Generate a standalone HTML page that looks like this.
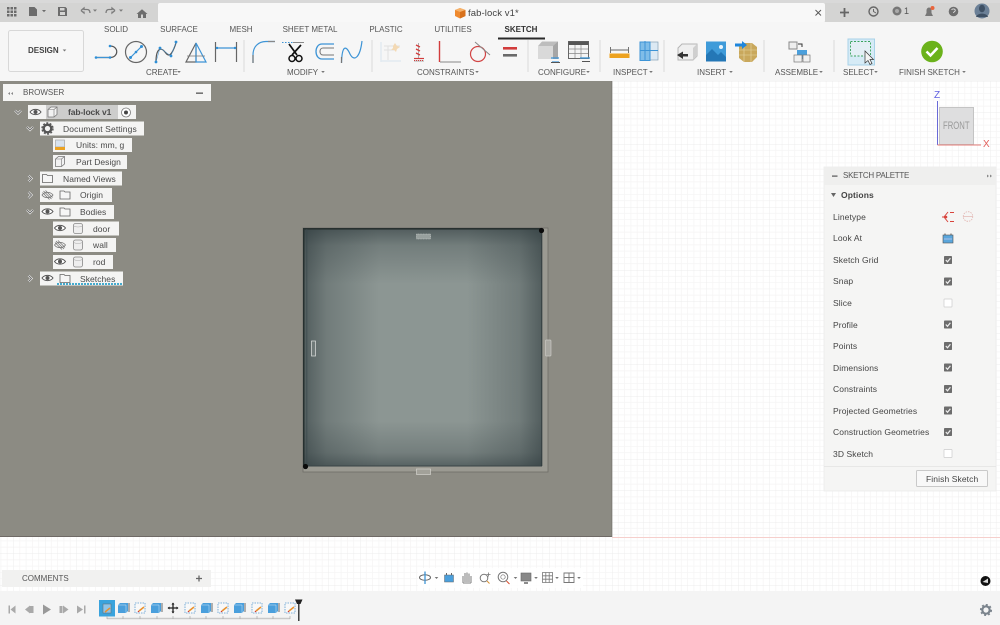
<!DOCTYPE html>
<html><head><meta charset="utf-8"><style>
html,body{margin:0;padding:0;width:1000px;height:625px;overflow:hidden;background:#fff;font-family:"Liberation Sans",sans-serif;color:#444}
.t{position:absolute;white-space:nowrap;font-size:8px;letter-spacing:0;line-height:10px;color:#555}
.c{transform:translateX(-50%)}
.n{position:absolute;white-space:nowrap;font-size:8.5px;letter-spacing:.05px;line-height:14px;color:#4a4a4a}
.p{position:absolute;left:833px;font-size:8.5px;letter-spacing:.1px;line-height:10px;color:#444;white-space:nowrap}
svg{position:absolute;left:0;top:0}
</style></head><body>
<svg width="1000" height="625" viewBox="0 0 1000 625" fill="none">
<defs>
<pattern id="g" x="612" y="81" width="31.5" height="31.5" patternUnits="userSpaceOnUse">
<path d="M6.3 0V31.5M12.6 0V31.5M18.9 0V31.5M25.2 0V31.5M0 6.3H31.5M0 12.6H31.5M0 18.9H31.5M0 25.2H31.5" stroke="#f6f5f5" stroke-width=".8"/>
<path d="M0 0V31.5M0 0H31.5" stroke="#ececec" stroke-width=".9"/>
</pattern>
<linearGradient id="vl" x1="0" y1="0" x2="1" y2="0"><stop offset="0" stop-color="#2c383b" stop-opacity=".6"/><stop offset=".3" stop-color="#2c383b" stop-opacity=".28"/><stop offset="1" stop-color="#2c383b" stop-opacity="0"/></linearGradient>
<linearGradient id="vr" x1="1" y1="0" x2="0" y2="0"><stop offset="0" stop-color="#2c383b" stop-opacity=".6"/><stop offset=".3" stop-color="#2c383b" stop-opacity=".28"/><stop offset="1" stop-color="#2c383b" stop-opacity="0"/></linearGradient>
<linearGradient id="vt" x1="0" y1="0" x2="0" y2="1"><stop offset="0" stop-color="#2c383b" stop-opacity=".6"/><stop offset=".3" stop-color="#2c383b" stop-opacity=".26"/><stop offset="1" stop-color="#2c383b" stop-opacity="0"/></linearGradient>
<linearGradient id="vb" x1="0" y1="1" x2="0" y2="0"><stop offset="0" stop-color="#2c383b" stop-opacity=".55"/><stop offset=".3" stop-color="#2c383b" stop-opacity=".25"/><stop offset="1" stop-color="#2c383b" stop-opacity="0"/></linearGradient>
<g id="eye"><path d="M-5.500 0C-3 -3.500 3 -3.500 5.500 0C3 3.500 -3 3.500 -5.500 0Z" fill="#fff" stroke="#555" stroke-width="1"/><circle r="2" fill="#555"/></g>
<g id="eyeoff" stroke="#777" stroke-width=".8"><path d="M-5.500 0C-3 -3.500 3 -3.500 5.500 0C3 3.500 -3 3.500 -5.500 0Z"/><path d="M-4 -4L4 4M-2 -4.500L5 2.500M-5 -2.500L2 4.500"/></g>
<path id="folder" d="M-5 -4H-1L0 -3H5V4H-5Z" fill="#f6f6f6" stroke="#666" stroke-width=".8"/>
<g id="body"><rect x="-4.500" y="-5" width="9" height="10" rx="2" fill="#eee" stroke="#888" stroke-width=".8"/><path d="M-4.500 -2.500Q0 -.5 4.500 -2.500" stroke="#aaa" stroke-width=".6"/></g>
<g id="comp"><path d="M-4.500 -2.500L-1.500 -5H4.500V2.500L1.500 5H-4.500Z" fill="#f2f2f2" stroke="#777" stroke-width=".8"/><path d="M-4.500 -2.500H1.500V5M1.500 -2.500L4.500 -5" stroke="#777" stroke-width=".6"/></g>
<g id="chk"><rect x="-4" y="-4" width="8" height="8" rx=".8" fill="#6d6d6d"/><path d="M-2.200 0L-.5 1.800L2.400 -1.800" stroke="#eee" stroke-width="1.200"/></g>
<rect id="unc" x="-4" y="-4" width="8" height="8" rx=".5" fill="#fff" stroke="#ccc" stroke-width=".7"/>
<path id="tri" d="M-1.800 0H1.800L0 2Z" fill="#777"/>
<g id="cube"><path d="M-5 -3L-3 -5H5V3L3 5H-5Z" fill="#4a9fdc"/><path d="M-5 -3H3V5" stroke="#cfe6f6" stroke-width=".5"/><path d="M6 -5V4" stroke="#444" stroke-width=".8"/></g>
<g id="sk"><rect x="-5" y="-5" width="10" height="10" fill="#f8f8f8" stroke="#5a9bd0" stroke-width=".8" stroke-dasharray="1.500 1"/><path d="M-1 3L4 -1" stroke="#e8912f" stroke-width="1.600"/><path d="M-2 4L-1 3" stroke="#c33" stroke-width="1.200"/></g>
</defs>

<!-- base -->
<rect width="1000" height="625" fill="#fff"/>
<rect x="0" y="81" width="1000" height="510" fill="url(#g)"/>
<rect x="612" y="537" width="388" height="1" fill="#f6cfcc"/>

<!-- viewport grey -->
<rect x="0" y="81" width="612" height="456" fill="#8c8b83"/>
<rect x="0" y="536" width="612" height="1" fill="#6f6a66"/>
<rect x="611.500" y="81" width=".8" height="456" fill="#77756f"/>

<!-- wall + door -->
<rect x="303" y="228" width="245" height="244" fill="#9b9a92" stroke="#6e6d67" stroke-width=".8"/>
<rect x="304" y="229" width="238" height="237" fill="#8c9693"/>
<rect x="304" y="229" width="75" height="237" fill="url(#vl)"/>
<rect x="467" y="229" width="75" height="237" fill="url(#vr)"/>
<rect x="304" y="229" width="238" height="55" fill="url(#vt)"/>
<rect x="304" y="421" width="238" height="45" fill="url(#vb)"/>
<rect x="303" y="228" width="239" height="1.600" fill="#27302f"/>
<rect x="303" y="228" width="1.500" height="238" fill="#26302f"/>
<rect x="306.500" y="229" width=".7" height="237" fill="#39474a"/>
<rect x="303" y="465.500" width="239" height="1" fill="#3a4446"/>
<rect x="541.300" y="229" width="1" height="237" fill="#303a3c"/>
<circle cx="541.500" cy="230.500" r="2.600" fill="#0b0b0b"/>
<circle cx="305.500" cy="466.500" r="2.600" fill="#0b0b0b"/>
<rect x="416.500" y="234" width="14" height="5" fill="#98a09e" stroke="#d0d4d2" stroke-width=".6" stroke-dasharray="1 .6"/>
<rect x="311.500" y="341" width="4" height="15" fill="#6f7978" stroke="#e0e2e0" stroke-width=".7"/>
<rect x="545.500" y="340" width="5.500" height="16" rx="1" fill="#a8a8a2" stroke="#c9c8c3" stroke-width=".7"/>
<rect x="416.500" y="469" width="14" height="5.500" fill="#a2a199" stroke="#d3d2cc" stroke-width=".7"/>

<!-- top bars -->
<rect x="0" y="0" width="1000" height="22" fill="#d4d4d3"/>
<rect x="0" y="0" width="1000" height="3" fill="#d9d9d9"/>
<rect x="158" y="3" width="667" height="19.500" rx="2" fill="#f8f8f8"/>
<rect x="0" y="22" width="1000" height="59" fill="#f6f6f6"/>

<!-- top-left icons -->
<g fill="#6c6c6c"><path d="M7 7h2.500v2.500H7zM10.500 7H13v2.500h-2.500zM14 7h2.500v2.500H14zM7 10.500h2.500V13H7zM10.500 10.500H13V13h-2.500zM14 10.500h2.500V13H14zM7 14h2.500v2.500H7zM10.500 14H13v2.500h-2.500zM14 14h2.500v2.500H14z"/>
<path d="M29 7h5.500l2.500 2.500V16H29z"/><path d="M42 10h4l-2 2.200z"/>
<path d="M58 7h7.500l1.500 1.500V16h-9z"/></g>
<rect x="60" y="8" width="4.500" height="2.500" fill="#d4d4d3"/><rect x="60" y="12" width="5" height="3" fill="#d4d4d3"/>
<path d="M81 10.500L84 8V9.500H87C89 9.500 90 11 90 13M81 10.500L84 13V11.500" stroke="#7b7b7b" stroke-width="1.300"/>
<path d="M93 9.500h4l-2 2.200z" fill="#7b7b7b"/>
<path d="M115 10.500L112 8V9.500H109C107 9.500 106 11 106 13M115 10.500L112 13V11.500" stroke="#7b7b7b" stroke-width="1.300"/>
<path d="M119 9.500h4l-2 2.200z" fill="#7b7b7b"/>
<path d="M136.500 14L142 9.300L147.500 14H146V18H138V14Z" fill="#6d6d6d"/><rect x="141" y="14.500" width="2" height="3.500" fill="#d4d4d3"/>

<!-- doc tab -->
<path d="M455 10L460 8L465.500 10V16L460 18.500L455 16Z" fill="#ef8a2f"/><path d="M455 10L460 12L465.500 10L460 8Z" fill="#f6b26b"/><path d="M460 12V18.500L465.500 16V10Z" fill="#d8711c"/>
<path d="M815.500 10L821 15.500M821 10L815.500 15.500" stroke="#555" stroke-width=".9"/>

<!-- top right -->
<path d="M844.500 8V17M840 12.500H849" stroke="#666" stroke-width="1.800"/>
<circle cx="873.500" cy="11.500" r="4.500" stroke="#666" stroke-width="1.400"/><path d="M873.500 9V11.500L876 13" stroke="#666"/>
<circle cx="897" cy="11" r="4.500" fill="#777"/><circle cx="897" cy="11" r="2" fill="#aaa"/>
<path d="M925 16H933L931.500 13V10.500C931.500 8.500 930 7.500 929 7.500C928 7.500 926.500 8.500 926.500 10.500V13Z" fill="#777"/><circle cx="932.500" cy="8" r="2" fill="#e8643c"/>
<circle cx="953.500" cy="11.500" r="4.800" fill="#6d6d6d"/><path d="M951.700 10C952 8.500 955.300 8.500 955.300 10.500C955.300 11.500 953.500 11.800 953.500 13" stroke="#ddd" stroke-width=".9"/>
<circle cx="982" cy="11" r="7.500" fill="#6b8097"/><ellipse cx="982" cy="8.500" rx="3" ry="3.800" fill="#3e5064"/><path d="M976 17C977 12.500 987 12.500 988 17Z" fill="#3e5064"/>

<!-- DESIGN button -->
<rect x="8.500" y="30.500" width="75" height="41" rx="2" fill="#f7f7f7" stroke="#d8d8d8"/>
<use href="#tri" x="64.500" y="49.500"/>

<!-- separators -->
<path d="M244 40V72M372 40V72M528 40V72M600 40V72M664 40V72M764 40V72M834 40V72" stroke="#d9d9d9" stroke-width="1"/>
<!-- sketch tab underline -->
<rect x="498" y="37.500" width="47" height="2" fill="#2a2a2a"/>

<!-- label arrows -->
<use href="#tri" x="179" y="71"/><use href="#tri" x="323" y="71"/><use href="#tri" x="477" y="71"/><use href="#tri" x="588" y="71"/><use href="#tri" x="651" y="71"/><use href="#tri" x="731" y="71"/><use href="#tri" x="821" y="71"/><use href="#tri" x="876" y="71"/><use href="#tri" x="964" y="71"/>

<!-- CREATE icons -->
<g stroke-width="1.200">
<path d="M96 57.500H110C119 57.500 119 46 110 46" stroke="#555"/>
<path d="M96 57.500H110" stroke="#3d94d6"/><circle cx="96" cy="57.500" r="1.300" fill="#2f8fd6"/><circle cx="110" cy="57.500" r="1.300" fill="#2f8fd6"/><circle cx="110" cy="46" r="1.300" fill="#2f8fd6"/>
<circle cx="136" cy="52" r="10.500" stroke="#666"/><path d="M130 58L142 46" stroke="#3d94d6"/><circle cx="130.500" cy="57.500" r="1.500" fill="#2f8fd6"/><circle cx="141.500" cy="46.500" r="1.500" fill="#2f8fd6"/><circle cx="136" cy="52" r="1.300" fill="#2f8fd6"/>
<path d="M156 62C156 48 161 47 165 52C169 58 172 55 176 43" stroke="#555"/><path d="M156 62L160 48L171 56L176 42" stroke="#3d94d6" stroke-width=".5"/><circle cx="156" cy="62" r="1.400" fill="#2f8fd6"/><circle cx="160" cy="48" r="1.400" fill="#2f8fd6"/><circle cx="171" cy="56" r="1.400" fill="#2f8fd6"/><circle cx="176" cy="42" r="1.400" fill="#2f8fd6"/>
<path d="M196 43L186 62H196Z" stroke="#666"/><path d="M196 43L206 62H196Z" stroke="#3d94d6"/><path d="M187 56H205" stroke="#777" stroke-width=".8"/>
<path d="M215.500 42V62M236.500 42V62" stroke="#666"/><path d="M216 48H236" stroke="#3d94d6"/><circle cx="217" cy="48" r="1.200" fill="#2f8fd6"/><circle cx="235" cy="48" r="1.200" fill="#2f8fd6"/>
</g>
<!-- MODIFY icons -->
<path d="M253 63V55C253 47 258 41.500 266 41.500H275" stroke="#3d94d6" stroke-width="1.200"/><path d="M253 63V55" stroke="#777" stroke-width="1.200"/><path d="M268 41.500H275" stroke="#888" stroke-width="1.200"/>
<path d="M282 42.500H293" stroke="#3d94d6" stroke-dasharray="1.500 1.500"/><path d="M293 42.500H304" stroke="#888"/>
<path d="M289 44L297 55M301 45L292 55" stroke="#111" stroke-width="1.700"/><circle cx="292" cy="58.500" r="3" fill="#f5f5f5" stroke="#111" stroke-width="1.500"/><circle cx="299" cy="58.500" r="3" fill="#f5f5f5" stroke="#111" stroke-width="1.500"/>
<path d="M334 44H322C314 44 314 59 322 59H334" stroke="#3d94d6" stroke-width="1.300"/><path d="M334 48H323C319 48 319 55 323 55H334" stroke="#777" stroke-width="1.100"/>
<path d="M341.500 63C342 45 346 45 350 54C354 62 360 58 362 41" stroke="#3d94d6" stroke-width="1.200"/><path d="M341.500 63V57" stroke="#777" stroke-width="1.200"/>

<!-- CONSTRAINTS icons -->
<g opacity=".5"><path d="M381 42V62M381 61H401" stroke="#cfe0ee" stroke-width="1.500"/><path d="M384 46H400M384 50H394M388 46V60" stroke="#ccc"/><path d="M393 46l2 -3 2 3 3 1 -3 2 -1 3 -2 -2 -3 0 2 -2z" fill="#f2be74"/></g>
<path d="M418.500 43V59" stroke="#aaa"/><path d="M416 45L420 47M416 49L420 51M416 53L420 55" stroke="#d23c3c" stroke-width="1.300"/>
<path d="M414 58.500H424" stroke="#d23c3c" stroke-width="1.200"/><path d="M414 61H424" stroke="#aaa"/><path d="M414 60.500H424" stroke="#d23c3c" stroke-dasharray="1 1" stroke-width=".9"/>
<path d="M439.500 41V62" stroke="#d23c3c" stroke-width="1.400"/><path d="M440 62H461" stroke="#888" stroke-width="1"/>
<circle cx="478" cy="54" r="7.500" stroke="#d24545" stroke-width="1.200"/><path d="M475 42L490 55" stroke="#888"/>
<rect x="503" y="47" width="14" height="2.600" fill="#d23c3c"/><rect x="503" y="54" width="14" height="2.600" fill="#6a6a6a"/>

<!-- CONFIGURE icons -->
<path d="M538 46L542 41.500H558V59H538Z" fill="#bdbdbd"/><path d="M538 46H553V59H538Z" fill="#d9d9d9"/><path d="M553 46L558 41.500V59H553Z" fill="#a6a6a6"/>
<path d="M551 58H559M552 62H559" stroke="#3d94d6" stroke-width="1.300"/><path d="M551 62.500H560" stroke="#555"/>
<rect x="568.500" y="41.500" width="20" height="17" fill="#f4f4f4" stroke="#666"/><rect x="568.500" y="41.500" width="20" height="3.500" fill="#555"/><path d="M569 49H588M569 53.500H588M575 45V58M581 45V58" stroke="#888" stroke-width=".7"/>
<path d="M580 58H590" stroke="#3d94d6" stroke-width="1.300"/><path d="M582 61.500H590" stroke="#555"/>

<!-- INSPECT icons -->
<path d="M610.500 47V53M628.500 47V53M611 50H628" stroke="#666" stroke-width=".9"/><rect x="609.500" y="53.500" width="20" height="4.500" fill="#eda21f"/>
<rect x="640" y="42" width="18" height="18" fill="#dce9f3" stroke="#85a0b5" stroke-width=".7"/><rect x="640" y="42" width="10" height="18.500" fill="#7fbde8" stroke="#3d94d6"/><path d="M645 41V61M640 50.500H658" stroke="#3d94d6"/>

<!-- INSERT icons -->
<path d="M678 48L682 44H697V56L693 60H678Z" fill="#efefef" stroke="#b5b5b5"/><path d="M693 48L697 44V56L693 60Z" fill="#cfcfcf"/><path d="M677 55L683 51.500V54H688V56.500H683V59Z" fill="#333"/>
<rect x="706" y="41.500" width="20" height="20" fill="#3f9bd9"/><path d="M706 61.500V55L712 49L718 55L721 52L726 57V61.500Z" fill="#2477b6"/><circle cx="721" cy="47" r="2" fill="#e9f4fb"/>
<path d="M739 46L744 43H752L757 47V57L752 62H744L739 58Z" fill="#c9a85c"/><path d="M739 50H757M739 55H757M744 43V62M751 43V62" stroke="#e7d6a4" stroke-width=".6"/>
<path d="M735 43.500H742V41L747 45L742 49V46.500H735Z" fill="#1e86dc"/>

<!-- ASSEMBLE icon -->
<path d="M789 42H797V49H789Z" fill="#eee" stroke="#888"/><path d="M798 44H802V47" stroke="#333" stroke-width="1"/>
<rect x="797" y="50" width="10" height="9" fill="#4a9fdc"/><rect x="797" y="59" width="8" height="7" fill="#f0f0f0" stroke="#777" stroke-width=".7" transform="translate(-3 -4)"/><rect x="803" y="55" width="7" height="7" fill="#f0f0f0" stroke="#777" stroke-width=".7"/>

<!-- SELECT icon -->
<rect x="848" y="39" width="26.500" height="26" fill="#d6ebf6" stroke="#a8d2e8"/>
<rect x="850.500" y="41.500" width="20" height="14.500" fill="#e4eff5" stroke="#3aa35c" stroke-width=".9" stroke-dasharray="2 1.500"/>
<path d="M865 51V63L868 60.500L870 64.500L872 63.500L870 59.500H873.500Z" fill="#f4f4f4" stroke="#333" stroke-width=".7"/>

<!-- FINISH icon -->
<circle cx="932" cy="51.500" r="10.800" fill="#6bb21b"/><path d="M926.500 51.500L930.500 55.500L937.500 48" stroke="#fff" stroke-width="2.500"/>

<!-- browser -->
<rect x="3" y="84" width="208" height="17" fill="#f5f5f4"/>
<path d="M8 93.500L10 92V95ZM11 93.500L13 92V95Z" fill="#888"/>
<rect x="196" y="92.500" width="7" height="1.300" fill="#555"/>

<!-- tree rows -->
<rect x="28" y="105" width="108" height="14" fill="#f3f3f2"/><rect x="46" y="105" width="72" height="14" fill="#cdcdcc"/>
<rect x="40" y="121.500" width="104" height="14" fill="#f4f4f3"/>
<rect x="53" y="138" width="79" height="14" fill="#f4f4f3"/>
<rect x="53" y="155" width="74" height="14" fill="#f4f4f3"/>
<rect x="40" y="171.500" width="82" height="14" fill="#f4f4f3"/>
<rect x="40" y="188" width="72" height="14" fill="#f4f4f3"/>
<rect x="40" y="205" width="74" height="14" fill="#f4f4f3"/>
<rect x="53" y="221.500" width="66" height="14" fill="#f4f4f3"/>
<rect x="53" y="238" width="63" height="14" fill="#f4f4f3"/>
<rect x="53" y="255" width="60" height="14" fill="#f4f4f3"/>
<rect x="40" y="271.500" width="83" height="14" fill="#f4f4f3"/>
<path d="M57 284H123" stroke="#2b9fc9" stroke-width="1.800" stroke-dasharray="2 1"/>

<!-- twisties -->
<g stroke="#f2f2f1" stroke-width="2.200"><path d="M15 110.500L18 113.500L21 110.500M27 127L30 130L33 127M28.500 175.500L31.500 178.500L28.500 181.500M28.500 192L31.500 195L28.500 198M27 210L30 213L33 210M28.500 275.500L31.500 278.500L28.500 281.500"/></g>
<g stroke="#666" stroke-width=".9"><path d="M15 110.500L18 113.500L21 110.500M27 127L30 130L33 127M28.500 175.500L31.500 178.500L28.500 181.500M28.500 192L31.500 195L28.500 198M27 210L30 213L33 210M28.500 275.500L31.500 278.500L28.500 281.500"/></g>

<use href="#eye" x="35.500" y="112"/>
<use href="#comp" x="52.500" y="112"/>
<circle cx="126" cy="112.500" r="4.500" fill="#fff" stroke="#777" stroke-width=".8"/><circle cx="126" cy="112.500" r="2" fill="#444"/>
<circle cx="47.500" cy="128.500" r="3.800" fill="none" stroke="#555" stroke-width="2.400"/><circle cx="47.500" cy="128.500" r="5.500" fill="none" stroke="#555" stroke-width="1.400" stroke-dasharray="2 1.500"/>
<rect x="55.500" y="140" width="9" height="7" fill="#d8e3ef" stroke="#999" stroke-width=".6"/><rect x="55" y="147" width="10" height="3" fill="#eba222"/>
<use href="#comp" x="60" y="161.500"/>
<use href="#folder" x="47.500" y="178.500"/>
<use href="#eyeoff" x="47.500" y="195"/><use href="#folder" x="65" y="195"/>
<use href="#eye" x="47.500" y="211.500"/><use href="#folder" x="65" y="212"/>
<use href="#eye" x="60" y="228"/><use href="#body" x="78" y="228.500"/>
<use href="#eyeoff" x="60" y="245"/><use href="#body" x="78" y="245"/>
<use href="#eye" x="60" y="261.500"/><use href="#body" x="78" y="262"/>
<use href="#eye" x="47.500" y="278"/><use href="#folder" x="65" y="278.500"/>

<!-- viewcube -->
<rect x="939.500" y="107.500" width="34" height="37" fill="#dededf" stroke="#c4c4c4"/>
<path d="M937.500 101V145" stroke="#6a6ad8" stroke-width="1"/>
<path d="M937.500 145H981" stroke="#e47c78" stroke-width="1"/>

<!-- palette -->
<rect x="824" y="167" width="172" height="324" fill="#f5f5f4" stroke="#ececec" stroke-width=".8"/>
<rect x="824" y="167" width="172" height="18" fill="#efefee"/>
<rect x="832" y="175.500" width="5.500" height="1.200" fill="#555"/>
<path d="M987 174.500L989 176L987 177.500ZM990 174.500L992 176L990 177.500Z" fill="#888"/>
<path d="M831 193H836L833.500 197Z" fill="#666"/>
<path d="M942 217H947M948 212L944 217L948 222M954 212.500H950M954 221.500H950" stroke="#d8443c" stroke-width="1"/><circle cx="946" cy="217" r="1.300" fill="#d8443c"/>
<circle cx="968" cy="216.500" r="4.800" stroke="#e2b5b1" stroke-width=".8" stroke-dasharray="1.500 1"/><path d="M963 216.500H973" stroke="#e2b5b1" stroke-width=".7"/>
<rect x="943" y="235" width="10" height="8" fill="#5aa6dc" stroke="#555" stroke-width=".6"/><path d="M945 235V233.500M951 235V233.500" stroke="#555"/><path d="M944 239H952" stroke="#cce" stroke-width=".7"/>
<use href="#chk" x="948" y="260"/><use href="#chk" x="948" y="281.500"/>
<use href="#unc" x="948" y="303"/>
<use href="#chk" x="948" y="324.500"/><use href="#chk" x="948" y="346"/><use href="#chk" x="948" y="367.500"/><use href="#chk" x="948" y="389"/><use href="#chk" x="948" y="410.500"/><use href="#chk" x="948" y="432"/>
<use href="#unc" x="948" y="453.500"/>
<path d="M824 466.500H996" stroke="#e2e2e2" stroke-width=".8"/>
<rect x="916.500" y="470.500" width="71" height="16" rx="1" fill="#f8f8f8" stroke="#c9c9c9"/>

<!-- comments -->
<rect x="2" y="570" width="209" height="17" fill="#f1f1f0"/>
<path d="M199 575.500V581.500M196 578.500H202" stroke="#666" stroke-width="1.300"/>

<!-- nav bar -->
<rect x="418" y="568" width="165" height="20" fill="#fff" opacity=".85"/>
<ellipse cx="425" cy="577.500" rx="5.500" ry="2.800" stroke="#666"/><path d="M425 571.500V584" stroke="#3d94d6" stroke-width="1.300"/>
<use href="#tri" x="436.500" y="577"/>
<rect x="444.500" y="575" width="9" height="7" fill="#4a9fdc" stroke="#666" stroke-width=".5"/><path d="M446.500 575V573M451.500 575V573" stroke="#666"/>
<path d="M463 583V576M465 582V573M467 582V572.500M469 582V573.500M471 583V576M463 583H471" stroke="#999" stroke-width="1.300"/>
<circle cx="484" cy="578" r="3.800" stroke="#777"/><path d="M487 581L489.500 583.500" stroke="#d89030"/><path d="M488.500 572.500V576.500M486.500 574.500H490.500" stroke="#777" stroke-width=".8"/>
<circle cx="503" cy="577" r="4.800" stroke="#777"/><circle cx="503" cy="577" r="2.200" stroke="#777" stroke-width=".7"/><path d="M506.500 581L509.500 584" stroke="#d85030"/>
<use href="#tri" x="515.500" y="577"/>
<rect x="521" y="573" width="10" height="8" fill="#888" stroke="#666" stroke-width=".6"/><path d="M524 583H528" stroke="#666" stroke-width="1.500"/>
<use href="#tri" x="536" y="577"/>
<path d="M542.500 572.500H552.500V582.500H542.500ZM542.500 575.800H552.500M542.500 579.200H552.500M545.800 572.500V582.500M549.200 572.500V582.500" stroke="#777" stroke-width=".8"/>
<use href="#tri" x="557" y="577"/>
<path d="M564 573H574V582.500H564ZM564 577.500H574M569 573V582.500" stroke="#777" stroke-width=".9"/>
<use href="#tri" x="579" y="577"/>

<!-- timeline bar -->
<rect x="0" y="591" width="1000" height="34" fill="#f4f4f4"/>
<g fill="#a9a9a9"><rect x="8.500" y="605.500" width="1.500" height="8"/><path d="M15.500 605.500V613.500L10.500 609.500Z"/>
<path d="M25 609.500L30 605.500V613.500Z"/><rect x="30" y="606" width="3.500" height="7"/>
<path d="M43 604.500L51 609.500L43 614.500Z" fill="#999"/>
<rect x="59.500" y="606" width="3" height="7"/><path d="M63 605.500L68.500 609.500L63 613.500Z"/>
<path d="M77 605.500L83 609.500L77 613.500Z"/><rect x="84" y="605.500" width="1.500" height="8"/></g>
<rect x="99" y="600" width="16" height="16.500" fill="#3aa3dd"/>
<path d="M107 618.500H290" stroke="#c9c9c9" stroke-width="1.500"/>
<path d="M107 616V619M123 616V619M140 616V619M157 616V619M173 616V619M190 616V619M206 616V619M223 616V619M240 616V619M257 616V619M273 616V619M290 616V619" stroke="#aaa" stroke-width=".7"/>
<rect x="103" y="604" width="8" height="9" fill="#8dc4e8" stroke="#666" stroke-width=".5"/><path d="M105 612L110 608" stroke="#e8912f" stroke-width="1.500"/>
<use href="#cube" x="123" y="608"/><use href="#sk" x="140" y="608"/><use href="#cube" x="156" y="608"/>
<path d="M173 603V613M168 608H178" stroke="#222" stroke-width="1.300"/><path d="M171.500 604.500L173 602.500L174.500 604.500ZM171.500 611.500L173 613.500L174.500 611.500ZM169.500 606.500L167.500 608L169.500 609.500ZM176.500 606.500L178.500 608L176.500 609.500Z" fill="#222"/>
<use href="#sk" x="190" y="608"/><use href="#cube" x="206" y="608"/><use href="#sk" x="223" y="608"/><use href="#cube" x="239" y="608"/><use href="#sk" x="257" y="608"/><use href="#cube" x="273" y="608"/><use href="#sk" x="290" y="608"/>
<path d="M295 599.500H302.500L300.500 604H297Z" fill="#222"/><path d="M298.800 602V621" stroke="#222" stroke-width="1.300"/>

<!-- right bottom -->
<circle cx="985.500" cy="581" r="5" fill="#111"/><path d="M982.500 582L988 578.500V583Z" fill="#ddd"/>
<circle cx="986" cy="610" r="3.700" stroke="#7a838c" stroke-width="2.200"/><circle cx="986" cy="610" r="5.300" stroke="#7a838c" stroke-width="1.500" stroke-dasharray="2 2.100"/>
</svg>

<div class="t" style="left:28px;top:45.500px;font-weight:bold;color:#444">DESIGN</div>
<div class="t c" style="left:116px;top:25px">SOLID</div>
<div class="t c" style="left:179px;top:25px">SURFACE</div>
<div class="t c" style="left:241px;top:25px">MESH</div>
<div class="t c" style="left:310px;top:25px">SHEET METAL</div>
<div class="t c" style="left:386px;top:25px">PLASTIC</div>
<div class="t c" style="left:453px;top:25px">UTILITIES</div>
<div class="t c" style="left:521px;top:25px;color:#333;font-weight:bold">SKETCH</div>
<div class="t" style="left:468px;top:9px;font-size:9.500px;letter-spacing:.1px;color:#444">fab-lock v1*</div>

<div class="t" style="left:146px;top:67.500px">CREATE</div>
<div class="t" style="left:287px;top:67.500px">MODIFY</div>
<div class="t" style="left:417px;top:67.500px">CONSTRAINTS</div>
<div class="t" style="left:538px;top:67.500px">CONFIGURE</div>
<div class="t" style="left:613px;top:67.500px">INSPECT</div>
<div class="t" style="left:697px;top:67.500px">INSERT</div>
<div class="t" style="left:775px;top:67.500px">ASSEMBLE</div>
<div class="t" style="left:843px;top:67.500px">SELECT</div>
<div class="t" style="left:899px;top:67.500px">FINISH SKETCH</div>

<div class="t" style="left:23px;top:88px">BROWSER</div>
<div class="n" style="left:68px;top:105px;font-weight:bold;letter-spacing:-.1px">fab-lock v1</div>
<div class="n" style="left:63px;top:121.500px;letter-spacing:.12px">Document Settings</div>
<div class="n" style="left:76px;top:138px">Units: mm, g</div>
<div class="n" style="left:76px;top:155px">Part Design</div>
<div class="n" style="left:63px;top:171.500px">Named Views</div>
<div class="n" style="left:80px;top:188px">Origin</div>
<div class="n" style="left:80px;top:205px">Bodies</div>
<div class="n" style="left:93px;top:221.500px">door</div>
<div class="n" style="left:93px;top:238px">wall</div>
<div class="n" style="left:93px;top:255px">rod</div>
<div class="n" style="left:80px;top:271.500px">Sketches</div>

<div class="t" style="left:943px;top:121px;font-size:11px;color:#9a9a9a;transform:scaleX(.7);transform-origin:0 0">FRONT</div>
<div class="t" style="left:934px;top:91px;font-size:10px;color:#5f5fe0">Z</div>
<div class="t" style="left:983px;top:140px;font-size:10px;color:#e2605c">X</div>

<div class="t" style="left:843px;top:171px;letter-spacing:-.25px">SKETCH PALETTE</div>
<div class="p" style="left:841px;top:190px;font-weight:bold">Options</div>
<div class="p" style="top:212px">Linetype</div>
<div class="p" style="top:233px">Look At</div>
<div class="p" style="top:255px">Sketch Grid</div>
<div class="p" style="top:276px">Snap</div>
<div class="p" style="top:298px">Slice</div>
<div class="p" style="top:319.500px">Profile</div>
<div class="p" style="top:341px">Points</div>
<div class="p" style="top:362.500px">Dimensions</div>
<div class="p" style="top:384px">Constraints</div>
<div class="p" style="top:405.500px">Projected Geometries</div>
<div class="p" style="top:427px">Construction Geometries</div>
<div class="p" style="top:449px">3D Sketch</div>
<div class="p" style="left:926px;top:473.500px">Finish Sketch</div>

<div class="t" style="left:22px;top:574px">COMMENTS</div>
<div class="t" style="left:904px;top:6px;font-size:9px">1</div>
</body></html>
